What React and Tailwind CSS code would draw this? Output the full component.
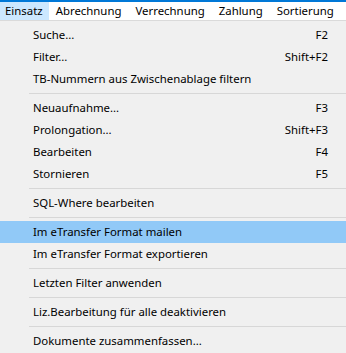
import React from "react"

const menuBar = ["Einsatz", "Abrechnung", "Verrechnung", "Zahlung", "Sortierung", "Fenster"]

const entries = [
  { label: "Suche...", key: "F2" },
  { label: "Filter...", key: "Shift+F2" },
  { label: "TB-Nummern aus Zwischenablage filtern" },
  { sep: true },
  { label: "Neuaufnahme...", key: "F3" },
  { label: "Prolongation...", key: "Shift+F3" },
  { label: "Bearbeiten", key: "F4" },
  { label: "Stornieren", key: "F5" },
  { sep: true },
  { label: "SQL-Where bearbeiten" },
  { sep: true },
  { label: "Im eTransfer Format mailen", active: true },
  { label: "Im eTransfer Format exportieren" },
  { sep: true },
  { label: "Letzten Filter anwenden" },
  { sep: true },
  { label: "Liz.Bearbeitung für alle deaktivieren" },
  { sep: true },
  { label: "Dokumente zusammenfassen..." },
]

const App = () => {
  return (
    <div className="w-[346px] h-[353px] overflow-hidden bg-[#f0f0f0] text-[11.4px] text-black font-['Noto_Sans',sans-serif]">
      {/* Menu bar */}
      <div className="border-t-2 border-[#0078d7] bg-white border-b border-b-[#dadada] flex whitespace-nowrap">
        {menuBar.map((m, i) => (
          <div
            key={m}
            className={`h-[18px] flex items-center ${i === 0 ? "bg-[#cce8ff] pl-[5px] pr-[6px]" : "px-[7px]"}`}
          >
            {m}
          </div>
        ))}
      </div>

      {/* Dropdown */}
      <div className="pt-[3px]">
        {entries.map((e, i) =>
          e.sep ? (
            <div key={i} className="h-[7px] flex items-center pl-[29px]">
              <div className="h-px w-full bg-[#d7d7d7]" />
            </div>
          ) : (
            <div
              key={i}
              className={`h-[22px] flex items-center justify-between pl-[33px] pr-[18px] whitespace-nowrap ${e.active ? "bg-[#91c9f7]" : ""}`}
            >
              <span>{e.label}</span>
              {e.key && <span>{e.key}</span>}
            </div>
          )
        )}
      </div>
    </div>
  )
}

export default App
